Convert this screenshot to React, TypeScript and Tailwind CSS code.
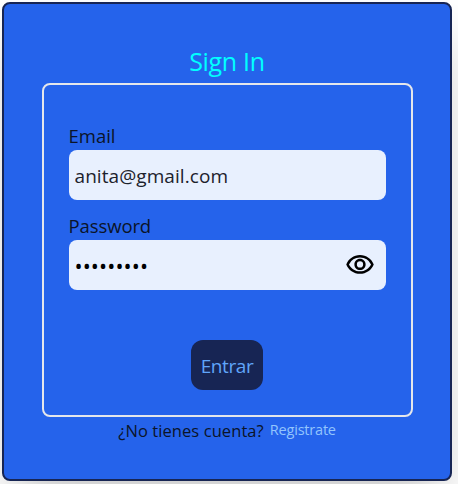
import { MdOutlineVisibility } from "react-icons/md";

export default function App() {
  return (
    <main className="h-[484px] w-[458px] overflow-hidden bg-white pt-[2px] pl-[2px] font-['Open_Sans','Noto_Sans',sans-serif]">
      <section className="flex h-[479px] w-[450px] flex-col items-center rounded-lg border-2 border-[#172554] bg-[#2563eb] pt-[39px] shadow-2xl">
        <h1 className="h-10 text-[25px] leading-9 tracking-[-0.3px] text-[#00ffff]">Sign In</h1>
        <form className="flex h-[334px] w-[371px] flex-col items-center rounded-lg border-2 border-[#e5e7eb] px-[25px] pt-[37px]">
          <label className="flex w-full flex-col text-[18.5px] leading-7 text-[#0b1428]">
            <span>Email</span>
            <input
              type="text"
              defaultValue="anita@gmail.com"
              className="h-[50px] w-full rounded-lg bg-[#e8f0fe] px-1.5 pt-0.5 text-[19px] tracking-[0.07px] text-[#1c222c] outline-none"
            />
          </label>
          <label className="mt-3 flex w-full flex-col text-[18.5px] leading-7 text-[#0b1428]">
            <span className="tracking-[-0.1px]">Password</span>
            <span className="flex h-[50px] w-full items-center rounded-lg bg-[#e8f0fe] pr-[11px] pl-1.5 text-black">
              <input
                type="password"
                defaultValue="123456789"
                className="min-w-0 flex-1 pt-px text-[21.5px] tracking-[0.1px] outline-none"
              />
              <MdOutlineVisibility size={30} />
            </span>
          </label>
          <button
            type="button"
            className="mt-[50px] h-[50px] w-[72px] rounded-xl bg-[#172554] pt-0.5 text-[19px] tracking-[-0.4px] text-[#60a5fa]"
          >
            Entrar
          </button>
        </form>
        <p className="flex h-7 items-center gap-1.5 text-[16.5px] text-[#0b1428]">
          <span className="tracking-[0.08px]">¿No tienes cuenta?</span>
          <a className="-mt-0.5 text-[14.5px] tracking-[-0.2px] text-[#93c5fd]">Registrate</a>
        </p>
      </section>
    </main>
  );
}
